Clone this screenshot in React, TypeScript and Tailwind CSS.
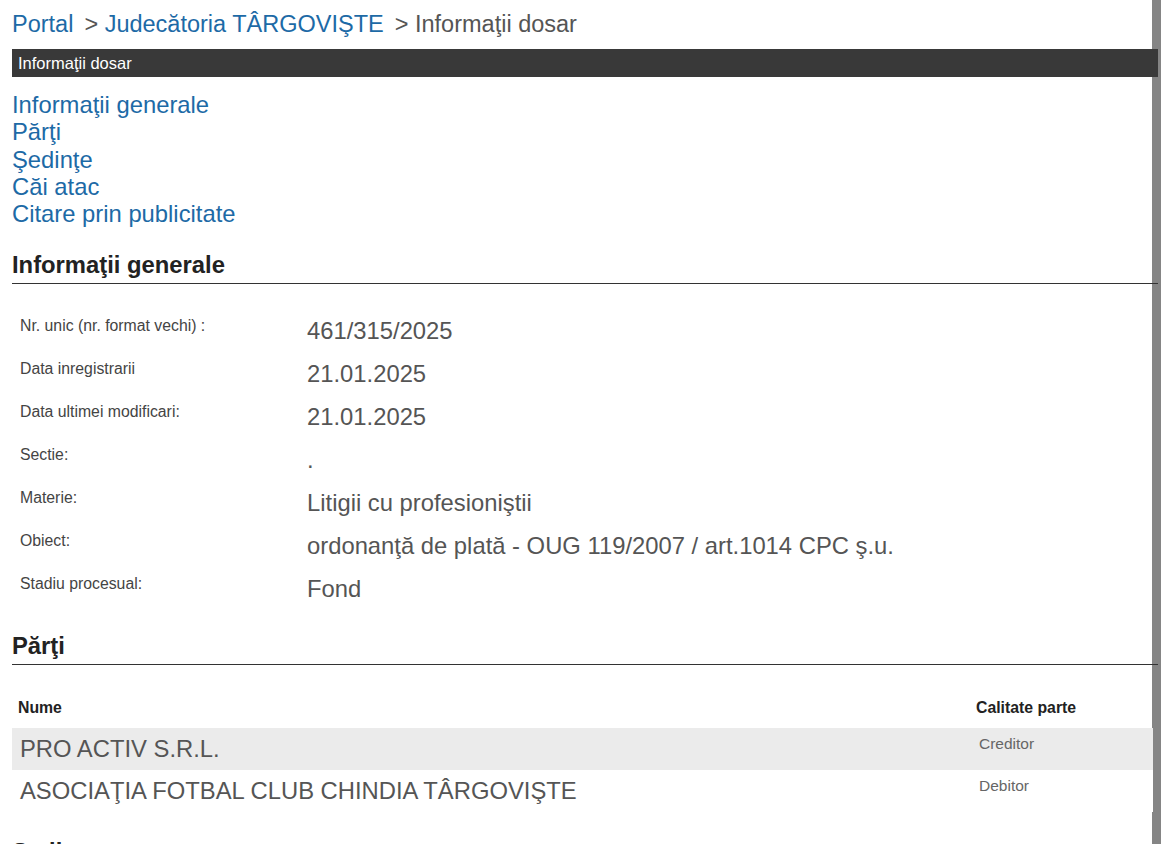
import React from 'react';

const infoRows: { label: string; value: string }[] = [
  { label: 'Nr. unic (nr. format vechi) :', value: '461/315/2025' },
  { label: 'Data inregistrarii',            value: '21.01.2025' },
  { label: 'Data ultimei modificari:',      value: '21.01.2025' },
  { label: 'Sectie:',                        value: '.' },
  { label: 'Materie:',                       value: 'Litigii cu profesioniştii' },
  { label: 'Obiect:',                        value: 'ordonanţă de plată - OUG 119/2007 / art.1014 CPC ş.u.' },
  { label: 'Stadiu procesual:',              value: 'Fond' },
];

const parti: { nume: string; calitate: string }[] = [
  { nume: 'PRO ACTIV S.R.L.',                          calitate: 'Creditor' },
  { nume: 'ASOCIAŢIA FOTBAL CLUB CHINDIA TÂRGOVIŞTE', calitate: 'Debitor' },
];

const navLinks = ['Informaţii generale', 'Părţi', 'Şedinţe', 'Căi atac', 'Citare prin publicitate'];

const SectionTitle = ({ children }: { children: React.ReactNode }) => (
  <h2 className="text-[23.8px] leading-[26px] font-bold text-[#222] pb-[5px] border-b border-[#333]">
    {children}
  </h2>
);

export default function App() {
  return (
    <div className="relative min-h-screen overflow-hidden bg-white font-['Liberation_Sans',Arial,sans-serif]">
      {/* right-hand gray stripe */}
      <div className="absolute top-0 bottom-0 left-[1152px] w-[9px] bg-[#858585]" />

      <div className="relative w-[1158px] pl-3">
        {/* Breadcrumb */}
        <div className="pt-[11px] text-[23.5px] leading-[26px] text-[#555] whitespace-nowrap">
          <a className="text-[#1d6aa6]">Portal</a>
          <span className="ml-[11px]">&gt; </span>
          <a className="text-[#1d6aa6]">Judecătoria TÂRGOVIŞTE</a>
          <span className="ml-[11px]">&gt; </span>
          <span>Informaţii dosar</span>
        </div>

        {/* Dark title bar */}
        <div className="mt-[12px] h-[28px] bg-[#393939] pl-[6px] flex items-center text-[16.5px] text-white">
          Informaţii dosar
        </div>

        {/* Section links */}
        <div className="mt-[14px] flex flex-col text-[23.8px] leading-[27.3px] text-[#1d6aa6]">
          {navLinks.map((l) => (
            <a key={l}>{l}</a>
          ))}
        </div>

        {/* Informatii generale */}
        <div className="mt-[25px]">
          <SectionTitle>Informaţii generale</SectionTitle>
        </div>

        <div className="mt-[26px]">
          {infoRows.map((r) => (
            <div key={r.label} className="h-[43px] pt-[8px] flex items-start">
              <div className="w-[295px] pl-2 text-[15.8px] leading-[16px] text-[#444]">{r.label}</div>
              <div className="text-[23.8px] leading-[26px] text-[#555]">{r.value}</div>
            </div>
          ))}
        </div>

        {/* Parti */}
        <div className="mt-[22px]">
          <SectionTitle>Părţi</SectionTitle>
        </div>

        <div className="mt-[35px] w-[1141px]">
          <div className="h-[28px] flex text-[15.8px] leading-[16px] font-bold text-[#222]">
            <div className="flex-1 pl-[6px]">Nume</div>
            <div className="w-[177px]">Calitate parte</div>
          </div>
          {parti.map((p, i) => (
            <div
              key={p.nume}
              className={`h-[42px] flex items-start ${i % 2 === 0 ? 'bg-[#ebebeb]' : 'bg-white'}`}
            >
              <div className="flex-1 pl-2 pt-[8px] text-[23.8px] leading-[26px] text-[#555]">{p.nume}</div>
              <div className="w-[174px] pt-[8px] text-[15.5px] leading-[16px] text-[#666]">{p.calitate}</div>
            </div>
          ))}
        </div>

        <div className="mt-[27px]">
          <SectionTitle>Şedinţe</SectionTitle>
        </div>
        <div className="h-[200px]" />
      </div>
    </div>
  );
}
